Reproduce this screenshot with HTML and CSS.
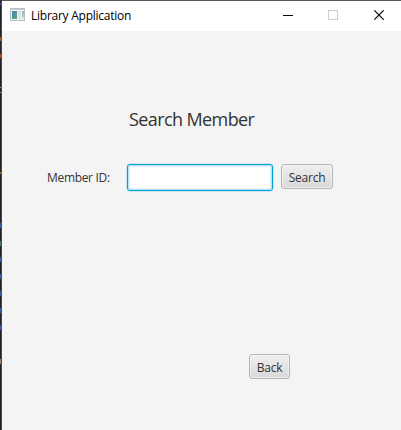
FILE: index.html
```html
<!DOCTYPE html>
<html lang="en">
<head>
<meta charset="utf-8">
<title>Library Application</title>
<link rel="stylesheet" href="styles.css">
</head>
<body>
<div class="backdrop"></div>
<main class="window">
  <header class="titlebar">
    <svg class="app-icon" width="16" height="16" viewBox="0 0 16 16">
      <defs>
        <linearGradient id="pane" x1="0" y1="0" x2="1" y2="1"><stop offset="0" stop-color="#4b84b4"/><stop offset="1" stop-color="#58a778"/></linearGradient>
        <linearGradient id="side" x1="0" y1="0" x2="0" y2="1"><stop offset="0" stop-color="#8fb2d8"/><stop offset=".6" stop-color="#a9d2b4"/><stop offset="1" stop-color="#eeeeee"/></linearGradient>
      </defs>
      <rect x=".5" y="1.5" width="14" height="12" fill="#f2f2f2" stroke="#b9bdc1"/>
      <path d="M1 2.500H14" stroke="#c9cfd3"/>
      <rect x="2" y="4" width="5" height="8" fill="url(#pane)"/>
      <rect x="8" y="4" width="3" height="8" fill="#dfe2e4"/>
      <rect x="12" y="4" width="2" height="8" fill="url(#side)"/>
    </svg>
    <span class="title">Library Application</span>
    <svg class="controls" width="101" height="10" viewBox="0 0 101 10" fill="none">
      <path d="M0 5.500H10" stroke="#000"/>
      <rect x="45.500" y=".5" width="9" height="9" stroke="#ccc"/>
      <path d="M91.300 .3L100.700 9.700M100.700 .3L91.300 9.700" stroke="#000" stroke-width="1.100"/>
    </svg>
  </header>
  <h1 class="heading">Search Member</h1>
  <form class="search">
    <label class="label" for="member">Member ID:</label>
    <input class="field" id="member" type="text">
    <button class="button" type="button">Search</button>
  </form>
  <div class="footer"><button class="button back" type="button">Back</button></div>
</main>
</body>
</html>
```
FILE: styles.css
```css
* { box-sizing: border-box; }
body {
  margin: 0;
  height: 430px;
  display: flex;
  overflow: hidden;
  background: #f4f4f4;
  font-family: "Open Sans", "Noto Sans", sans-serif;
  font-size: 12px;
  color: #333;
}
.backdrop {
  width: 2px;
  border-right: 1px solid #4a4a4c;
  background:
    linear-gradient(#36558f, #36558f) 0 3px / 1px 2px no-repeat,
    linear-gradient(#a85a2c, #a85a2c) 0 37px / 1px 4px no-repeat,
    linear-gradient(#a85a2c, #a85a2c) 0 54px / 1px 4px no-repeat,
    linear-gradient(#8aa, #8aa) 0 87px / 1px 1px no-repeat,
    linear-gradient(#8aa, #8aa) 0 92px / 1px 1px no-repeat,
    linear-gradient(#a8702c, #a8702c) 0 172px / 1px 2px no-repeat,
    linear-gradient(#3e5fa6, #3e5fa6) 0 223px / 1px 5px no-repeat,
    linear-gradient(#4a7a7a, #4a7a7a) 0 241px / 1px 5px no-repeat,
    linear-gradient(#3e5fa6, #3e5fa6) 0 257px / 1px 5px no-repeat,
    linear-gradient(#3e5fa6, #3e5fa6) 0 274px / 1px 5px no-repeat,
    linear-gradient(#3e5fa6, #3e5fa6) 0 291px / 1px 5px no-repeat,
    linear-gradient(#3e5fa6, #3e5fa6) 0 308px / 1px 5px no-repeat,
    linear-gradient(#3e5fa6, #3e5fa6) 0 325px / 1px 5px no-repeat,
    linear-gradient(#a08068, #a08068) 0 359px / 1px 5px no-repeat,
    #202226;
}
.window { flex: 1; border-top: 1px solid #58585a; }
.titlebar {
  display: flex;
  align-items: center;
  height: 30px;
  padding: 0 17px 2px 8px;
  background: #fff;
  color: #000;
}
.app-icon { margin-right: 5px; }
.title { flex: 1; letter-spacing: -0.25px; white-space: nowrap; }
.controls { display: block; }
.heading {
  margin: 75px 0 0 127px;
  height: 26px;
  line-height: 26px;
  font-size: 18px;
  font-weight: 400;
  letter-spacing: -0.6px;
}
.search {
  display: flex;
  align-items: flex-start;
  margin: 32px 0 0 45px;
  height: 27px;
}
.label { width: 80px; line-height: 27px; letter-spacing: -0.32px; }
.field {
  width: 146px;
  height: 27px;
  padding: 0 8px;
  border: 1px solid #039ed3;
  border-radius: 3px;
  outline: none;
  background: #fff;
  box-shadow: inset 0 0 0 1px #b9e3f2, inset 0 0 0 2px #e0f3fa, 0 0 0 1px #cbe8f2;
}
.button {
  width: 52px;
  height: 25px;
  margin: 0 0 0 8px;
  padding: 2px 0 0;
  border: 1px solid #b5b5b5;
  border-radius: 3px;
  background: linear-gradient(#efefef, #d9d9d9);
  box-shadow: inset 0 0 0 1px rgba(255, 255, 255, .45);
  font: inherit;
  line-height: 21px;
  letter-spacing: -0.25px;
  color: #333;
}
.footer { display: flex; margin: 163px 0 0 247px; }
.back { width: 41px; margin: 0; }
```
